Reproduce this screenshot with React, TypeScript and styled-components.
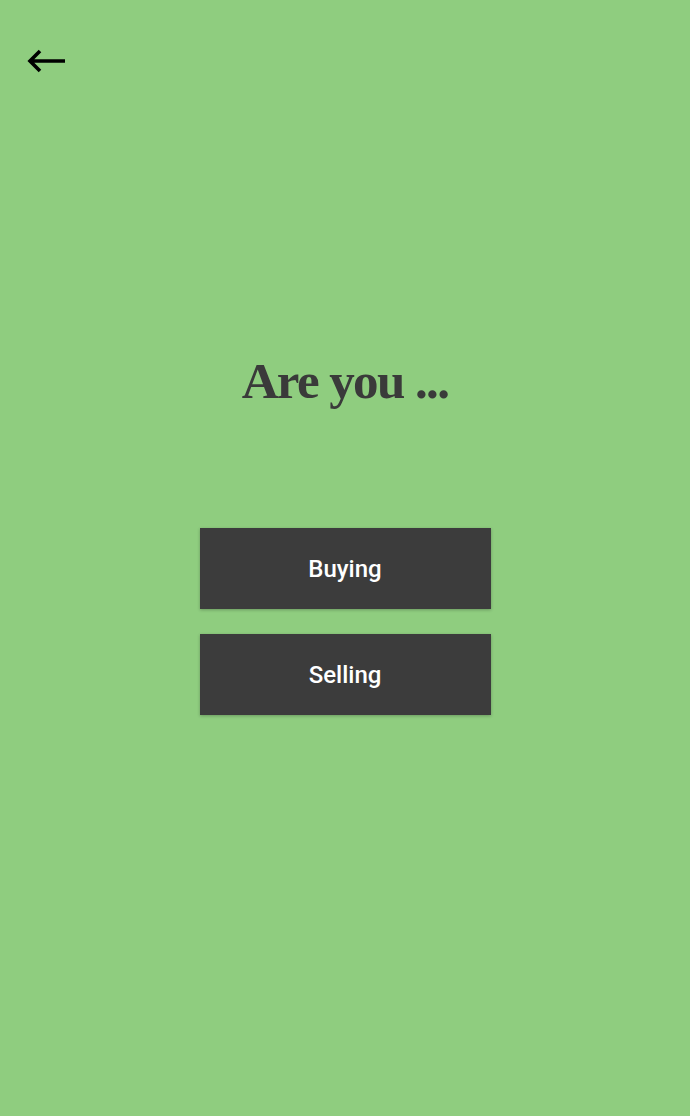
import React from "react";
import styled, { createGlobalStyle } from "styled-components";

const Global = createGlobalStyle`
  html, body { margin: 0; padding: 0; background: #8fcd7f; }
  * { box-sizing: border-box; }
`;

const Page = styled.div`
  width: 690px;
  height: 1116px;
  background: #8fcd7f;
  display: flex;
  flex-direction: column;
  overflow: hidden;
`;

const TopBar = styled.header`
  height: 122px;
  padding: 48px 0 0 27px;
  display: flex;
  align-items: flex-start;
`;

const BackButton = styled.button`
  width: 40px;
  height: 26px;
  padding: 0;
  border: none;
  background: transparent;
  display: flex;
  align-items: center;
  cursor: pointer;
`;

const Main = styled.main`
  display: flex;
  flex-direction: column;
  align-items: center;
`;

const Title = styled.h1`
  margin: 229px 0 0 0;
  font-family: "Liberation Serif", "DejaVu Serif", serif;
  font-weight: 700;
  font-size: 51px;
  line-height: 60px;
  letter-spacing: -1.6px;
  color: #3a3a3a;
`;

const Options = styled.div`
  margin-top: 117px;
  display: flex;
  flex-direction: column;
  gap: 25px;
`;

const Option = styled.button`
  width: 291px;
  height: 81px;
  border: none;
  background: #3c3c3c;
  color: #ffffff;
  font-family: Roboto, "Noto Sans", sans-serif;
  font-weight: 500;
  font-size: 24px;
  box-shadow: 0 1px 3px rgba(0, 0, 0, 0.25);
  cursor: pointer;
`;

export default function App() {
  return (
    <>
      <Global />
      <Page>
        <TopBar>
          <BackButton aria-label="Back">
            <svg width="40" height="26" viewBox="0 0 40 26" fill="none">
              <path
                d="M3 13 H38 M13 3 L3 13 L13 23"
                stroke="#000"
                strokeWidth="3.6"
                strokeLinecap="butt"
                strokeLinejoin="miter"
              />
            </svg>
          </BackButton>
        </TopBar>
        <Main>
          <Title>Are you ...</Title>
          <Options>
            <Option>Buying</Option>
            <Option>Selling</Option>
          </Options>
        </Main>
      </Page>
    </>
  );
}
